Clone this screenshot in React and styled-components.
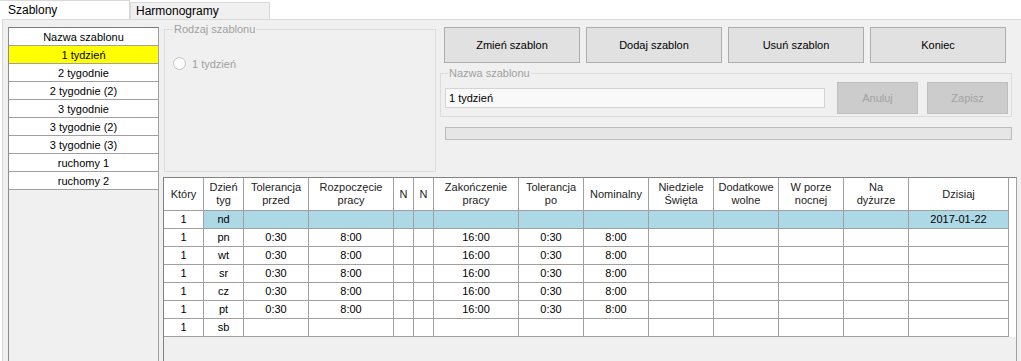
import React from 'react';
import styled, { createGlobalStyle } from 'styled-components';

const GlobalStyle = createGlobalStyle`
  html, body {
    margin: 0;
    padding: 0;
    background: #fff;
    overflow: hidden;
  }
  body {
    font-family: "Liberation Sans", Arial, sans-serif;
    font-size: 11px;
    color: #000;
  }
`;

const COLUMNS = '40px 40px 65px 85px 20px 20px 85px 65px 65px 65px 65px 65px 65px 100px 1fr';

const Window = styled.div`
  width: 1021px;
  height: 368px;
  overflow: hidden;
  display: flex;
  flex-direction: column;
`;

const TabStrip = styled.div`
  display: flex;
  align-items: flex-end;
  height: 19px;
  flex-shrink: 0;
`;

const Tab = styled.div`
  box-sizing: border-box;
  width: ${(p) => p.$width}px;
  height: ${(p) => (p.$active ? 19 : 17)}px;
  padding-left: ${(p) => (p.$active ? 8 : 5)}px;
  display: flex;
  align-items: center;
  font-size: 12px;
  background: ${(p) => (p.$active ? '#fff' : '#f0f0f0')};
  border: 1px solid #d9d9d9;
  border-bottom: none;
  border-left: ${(p) => (p.$active ? 'none' : '1px solid #d9d9d9')};
`;

const Page = styled.div`
  flex: 1;
  display: flex;
  gap: 4px;
  margin-left: 2px;
  padding: 3px 4px 0 5px;
  background: #f0f0f0;
  border-left: 1px solid #d9d9d9;
  border-top: 1px solid #d9d9d9;
  min-height: 0;
`;

const TemplateList = styled.div`
  box-sizing: border-box;
  width: 151px;
  margin-top: 4px;
  display: flex;
  flex-direction: column;
  border: 1px solid #a0a0a0;
  border-top-color: #7a7a7a;
  border-left-color: #8c8c8c;
  background: #f0f0f0;
`;

const ListRow = styled.div`
  box-sizing: border-box;
  height: 18px;
  display: flex;
  align-items: center;
  justify-content: center;
  border-bottom: 1px solid #a0a0a0;
  background: ${(p) => (p.$selected ? '#ffff00' : '#fff')};
`;

const RightColumn = styled.div`
  flex: 1;
  display: flex;
  flex-direction: column;
  min-width: 0;
`;

const TopSection = styled.div`
  display: flex;
  height: 149px;
`;

const GroupBox = styled.fieldset`
  box-sizing: border-box;
  margin: 0 0 0 1px;
  padding: 0 8px;
  width: 272px;
  height: 149px;
  border: 1px solid #dcdcdc;
  border-radius: 0;
  min-width: 0;
`;

const NameGroup = styled.fieldset`
  box-sizing: border-box;
  margin: 4px 0 0 0;
  padding: 0 3px 0 4px;
  height: 50px;
  border: 1px solid #dcdcdc;
  border-radius: 0;
  min-width: 0;
`;

const Legend = styled.legend`
  padding: 0 1px;
  margin-left: ${(p) => p.$offset || 0}px;
  color: #a0a0a0;
  font-size: 11px;
  line-height: 13px;
`;

const RadioRow = styled.label`
  display: flex;
  align-items: center;
  gap: 6px;
  margin-top: 21px;
  color: #a0a0a0;
`;

const RadioDot = styled.span`
  box-sizing: border-box;
  width: 13px;
  height: 13px;
  border-radius: 50%;
  border: 1px solid #c4c4c4;
  background: #fcfcfc;
`;

const ActionPanel = styled.div`
  flex: 1;
  margin: 0 5px 0 4px;
  display: flex;
  flex-direction: column;
`;

const ButtonRow = styled.div`
  display: flex;
  gap: 6px;
  margin: 4px 0 0 4px;
`;

const Button = styled.button`
  box-sizing: border-box;
  width: ${(p) => p.$width}px;
  height: ${(p) => p.$height}px;
  margin: 0;
  margin-left: ${(p) => p.$gap || 0}px;
  padding: 0;
  font-family: inherit;
  font-size: 11px;
  color: ${(p) => (p.disabled ? '#a3a3a3' : '#000')};
  background: ${(p) => (p.disabled ? '#cccccc' : '#e1e1e1')};
  border: 1px solid ${(p) => (p.disabled ? '#bfbfbf' : '#adadad')};
  border-radius: 0;
`;

const NameRow = styled.div`
  display: flex;
  align-items: center;
  height: 32px;
  margin-top: 2px;
`;

const TextBox = styled.div`
  box-sizing: border-box;
  width: 380px;
  height: 20px;
  padding-left: 3px;
  display: flex;
  align-items: center;
  background: #f9f9f9;
  border: 1px solid #d4d4d4;
`;

const Progress = styled.div`
  box-sizing: border-box;
  height: 13px;
  margin: 10px 0 0 5px;
  background: #e6e6e6;
  border: 1px solid #bcbcbc;
`;

const GridFrame = styled.div`
  box-sizing: border-box;
  flex: 1;
  margin-top: 5px;
  border: 1px solid #a0a0a0;
  border-top-color: #828282;
  border-left-color: #828282;
  background: #f0f0f0;
`;

const GridRow = styled.div`
  display: grid;
  grid-template-columns: ${COLUMNS};
  height: ${(p) => p.$height}px;
`;

const Cell = styled.div`
  box-sizing: border-box;
  display: flex;
  align-items: center;
  justify-content: center;
  text-align: center;
  line-height: 13px;
  color: ${(p) => (p.$head ? '#222' : '#000')};
  background: ${(p) => (p.$blue ? '#add8e6' : '#fff')};
  border-right: ${(p) => (p.$filler ? 'none' : '1px solid #a0a0a0')};
  border-bottom: ${(p) => (p.$filler ? 'none' : '1px solid #a0a0a0')};
`;

const templates = [
  '1 tydzień',
  '2 tygodnie',
  '2 tygodnie (2)',
  '3 tygodnie',
  '3 tygodnie (2)',
  '3 tygodnie (3)',
  'ruchomy 1',
  'ruchomy 2',
];

const headers = [
  ['Który'],
  ['Dzień', 'tyg'],
  ['Tolerancja', 'przed'],
  ['Rozpoczęcie', 'pracy'],
  ['N'],
  ['N'],
  ['Zakończenie', 'pracy'],
  ['Tolerancja', 'po'],
  ['Nominalny'],
  ['Niedziele', 'Święta'],
  ['Dodatkowe', 'wolne'],
  ['W porze', 'nocnej'],
  ['Na', 'dyżurze'],
  ['Dzisiaj'],
];

const workDay = (day) => ['1', day, '0:30', '8:00', '', '', '16:00', '0:30', '8:00', '', '', '', '', ''];
const emptyDay = (day) => ['1', day, '', '', '', '', '', '', '', '', '', '', '', ''];

const rows = [
  { cells: [...emptyDay('nd').slice(0, 13), '2017-01-22'], today: true },
  { cells: workDay('pn') },
  { cells: workDay('wt') },
  { cells: workDay('sr') },
  { cells: workDay('cz') },
  { cells: workDay('pt') },
  { cells: emptyDay('sb') },
];

export default function App() {
  return (
    <Window>
      <GlobalStyle />
      <TabStrip>
        <Tab $active $width={130}>Szablony</Tab>
        <Tab $width={140}>Harmonogramy</Tab>
      </TabStrip>
      <Page>
        <TemplateList>
          <ListRow>Nazwa szablonu</ListRow>
          {templates.map((name, i) => (
            <ListRow key={name} $selected={i === 0}>
              {name}
            </ListRow>
          ))}
        </TemplateList>
        <RightColumn>
          <TopSection>
            <GroupBox>
              <Legend>Rodzaj szablonu</Legend>
              <RadioRow>
                <RadioDot />
                1 tydzień
              </RadioRow>
            </GroupBox>
            <ActionPanel>
              <ButtonRow>
                <Button $width={136} $height={36}>Zmień szablon</Button>
                <Button $width={136} $height={36}>Dodaj szablon</Button>
                <Button $width={136} $height={36}>Usuń szablon</Button>
                <Button $width={136} $height={36}>Koniec</Button>
              </ButtonRow>
              <NameGroup>
                <Legend $offset={3}>Nazwa szablonu</Legend>
                <NameRow>
                  <TextBox>1 tydzień</TextBox>
                  <Button $width={81} $height={32} $gap={12} disabled>
                    Anuluj
                  </Button>
                  <Button $width={81} $height={32} $gap={9} disabled>
                    Zapisz
                  </Button>
                </NameRow>
              </NameGroup>
              <Progress />
            </ActionPanel>
          </TopSection>
          <GridFrame>
            <GridRow $height={33}>
              {headers.map((lines, i) => (
                <Cell key={i} $head>
                  <div>
                    {lines.map((l) => (
                      <div key={l}>{l}</div>
                    ))}
                  </div>
                </Cell>
              ))}
              <Cell $filler />
            </GridRow>
            {rows.map((row, r) => (
              <GridRow key={r} $height={18}>
                {row.cells.map((v, c) => (
                  <Cell key={c} $blue={row.today && c > 0}>
                    {v}
                  </Cell>
                ))}
                <Cell $filler />
              </GridRow>
            ))}
          </GridFrame>
        </RightColumn>
      </Page>
    </Window>
  );
}
